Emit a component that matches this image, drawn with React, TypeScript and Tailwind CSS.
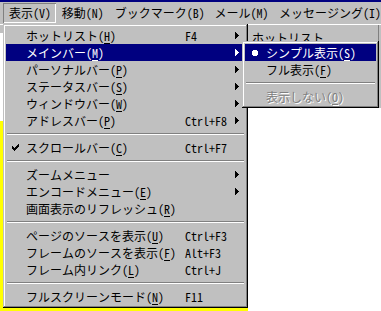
import React from 'react';

type Row =
  | { sep: true }
  | {
      sep?: false;
      pre: string;
      mn?: string;
      post?: string;
      shortcut?: string;
      arrow?: boolean;
      check?: boolean;
      bullet?: boolean;
      hi?: boolean;
      disabled?: boolean;
    };

const mainItems: Row[] = [
  { pre: 'ホットリスト(', mn: 'H', post: ')', shortcut: 'F4', arrow: true },
  { pre: 'メインバー(', mn: 'M', post: ')', arrow: true, hi: true },
  { pre: 'パーソナルバー(', mn: 'P', post: ')', arrow: true },
  { pre: 'ステータスバー(', mn: 'S', post: ')', arrow: true },
  { pre: 'ウィンドウバー(', mn: 'W', post: ')', arrow: true },
  { pre: 'アドレスバー(', mn: 'P', post: ')', shortcut: 'Ctrl+F8', arrow: true },
  { sep: true },
  { pre: 'スクロールバー(', mn: 'C', post: ')', shortcut: 'Ctrl+F7', check: true },
  { sep: true },
  { pre: 'ズームメニュー', arrow: true },
  { pre: 'エンコードメニュー(', mn: 'E', post: ')', arrow: true },
  { pre: '画面表示のリフレッシュ(', mn: 'R', post: ')' },
  { sep: true },
  { pre: 'ページのソースを表示(', mn: 'U', post: ')', shortcut: 'Ctrl+F3' },
  { pre: 'フレームのソースを表示(', mn: 'F', post: ')', shortcut: 'Alt+F3' },
  { pre: 'フレーム内リンク(', mn: 'L', post: ')', shortcut: 'Ctrl+J' },
  { sep: true },
  { pre: 'フルスクリーンモード(', mn: 'N', post: ')', shortcut: 'F11' },
];

const subItems: Row[] = [
  { pre: 'シンプル表示(', mn: 'S', post: ')', bullet: true, hi: true },
  { pre: 'フル表示(', mn: 'F', post: ')' },
  { sep: true },
  { pre: '表示しない(', mn: 'O', post: ')', disabled: true },
];

function Arrow({ color }: { color: string }) {
  return (
    <svg width="4" height="7" viewBox="0 0 4 7" shapeRendering="crispEdges" fill={color}>
      <rect x="0" y="0" width="1" height="7" />
      <rect x="1" y="1" width="1" height="5" />
      <rect x="2" y="2" width="1" height="3" />
      <rect x="3" y="3" width="1" height="1" />
    </svg>
  );
}

function Check({ color }: { color: string }) {
  const px: [number, number][] = [
    [6, 0],
    [5, 1], [6, 1],
    [0, 2], [4, 2], [5, 2], [6, 2],
    [0, 3], [1, 3], [3, 3], [4, 3], [5, 3],
    [0, 4], [1, 4], [2, 4], [3, 4], [4, 4],
    [1, 5], [2, 5], [3, 5],
    [2, 6],
  ];
  return (
    <svg width="7" height="7" viewBox="0 0 7 7" shapeRendering="crispEdges" fill={color}>
      {px.map(([x, y], i) => (
        <rect key={i} x={x} y={y} width="1" height="1" />
      ))}
    </svg>
  );
}

function Bullet({ color }: { color: string }) {
  return (
    <svg width="6" height="6" viewBox="0 0 6 6" shapeRendering="crispEdges" fill={color}>
      <rect x="1" y="0" width="4" height="6" />
      <rect x="0" y="1" width="6" height="4" />
    </svg>
  );
}

function Separator() {
  return (
    <div className="h-[10px] pt-[4px] px-[1px]">
      <div className="h-px bg-[#808080]" />
      <div className="h-px bg-white" />
    </div>
  );
}

function Label({ r }: { r: Exclude<Row, { sep: true }> }) {
  return (
    <span className="whitespace-nowrap">
      {r.pre}
      {r.mn && <span className="underline decoration-1 underline-offset-[2px]">{r.mn}</span>}
      {r.post}
    </span>
  );
}

function MainRow({ r }: { r: Row }) {
  if (r.sep) return <Separator />;
  const fg = r.hi ? '#ffffff' : '#000000';
  return (
    <div
      className={`flex h-[17px] items-center leading-[17px] ${
        r.hi ? 'bg-[#000080] text-white' : 'text-black'
      }`}
    >
      <div className="flex w-[20px] items-center pl-[6px]">{r.check && <Check color={fg} />}</div>
      <div className="w-[159px]">
        <Label r={r} />
      </div>
      <div className="flex-1 whitespace-nowrap">{r.shortcut}</div>
      <div className="flex w-[4px] items-center">{r.arrow && <Arrow color={fg} />}</div>
      <div className="w-[6px]" />
    </div>
  );
}

function SubRow({ r }: { r: Row }) {
  if (r.sep) return <Separator />;
  return (
    <div
      className={`flex h-[17px] items-center leading-[17px] ${
        r.hi
          ? 'bg-[#000080] text-white'
          : r.disabled
          ? 'text-[#808080] [text-shadow:1px_1px_0_#ffffff]'
          : 'text-black'
      }`}
    >
      <div className="flex w-[21px] items-center pl-[7px]">
        {r.bullet && <Bullet color={r.hi ? '#ffffff' : '#000000'} />}
      </div>
      <div className="flex-1">
        <Label r={r} />
      </div>
    </div>
  );
}

const raised =
  'shadow-[inset_-1px_-1px_#000000,inset_1px_1px_#c0c0c0,inset_-2px_-2px_#808080,inset_2px_2px_#ffffff]';

export default function App() {
  return (
    <div className="relative h-[311px] w-[381px] overflow-hidden bg-white text-[12px] text-black [font-family:'Noto_Sans_Mono_CJK_JP','Noto_Sans_CJK_JP',sans-serif]">
      {/* title bar edge */}
      <div className="h-[2px] bg-[#000080]" />
      {/* menu bar */}
      <div className="flex h-[22px] items-start bg-[#c0c0c0] pl-[3px] pt-[1px] leading-[20px]">
        <div className="h-[20px] w-[54px] whitespace-nowrap pl-[6px] shadow-[inset_1px_1px_#808080,inset_-1px_-1px_#ffffff]">
          表示(V)
        </div>
        <div className="h-[20px] w-[54px] whitespace-nowrap pl-[6px]">移動(N)</div>
        <div className="h-[20px] w-[102px] whitespace-nowrap pl-[6px]">ブックマーク(B)</div>
        <div className="h-[20px] w-[66px] whitespace-nowrap pl-[6px]">メール(M)</div>
        <div className="h-[20px] flex-1 whitespace-nowrap pl-[6px]">メッセージング(I)</div>
      </div>
      {/* window content behind the menus */}
      <div className="h-px bg-white" />
      <div className="flex h-[286px]">
        <div className="flex w-[248px] flex-col">
          <div className="h-[8px] bg-[#c0c0c0]" />
          <div className="h-[88px] bg-white" />
          <div className="flex-1 bg-[#ffff00]" />
        </div>
        <div className="flex flex-1 flex-col">
          <div className="flex h-[83px] bg-[#c0c0c0]">
            <div className="flex-1 pl-[4px] pt-[4px] leading-[17px]">ホットリスト</div>
            <div className="w-px bg-[#808080]" />
            <div className="w-[2px]" />
          </div>
          <div className="flex-1 bg-white" />
        </div>
      </div>

      {/* main dropdown */}
      <div className={`absolute left-[3px] top-[24px] w-[245px] bg-[#c0c0c0] p-[3px] ${raised}`}>
        {mainItems.map((r, i) => (
          <MainRow key={i} r={r} />
        ))}
      </div>

      {/* submenu */}
      <div className={`absolute left-[242px] top-[41px] w-[137px] bg-[#c0c0c0] p-[3px] ${raised}`}>
        {subItems.map((r, i) => (
          <SubRow key={i} r={r} />
        ))}
      </div>
    </div>
  );
}
